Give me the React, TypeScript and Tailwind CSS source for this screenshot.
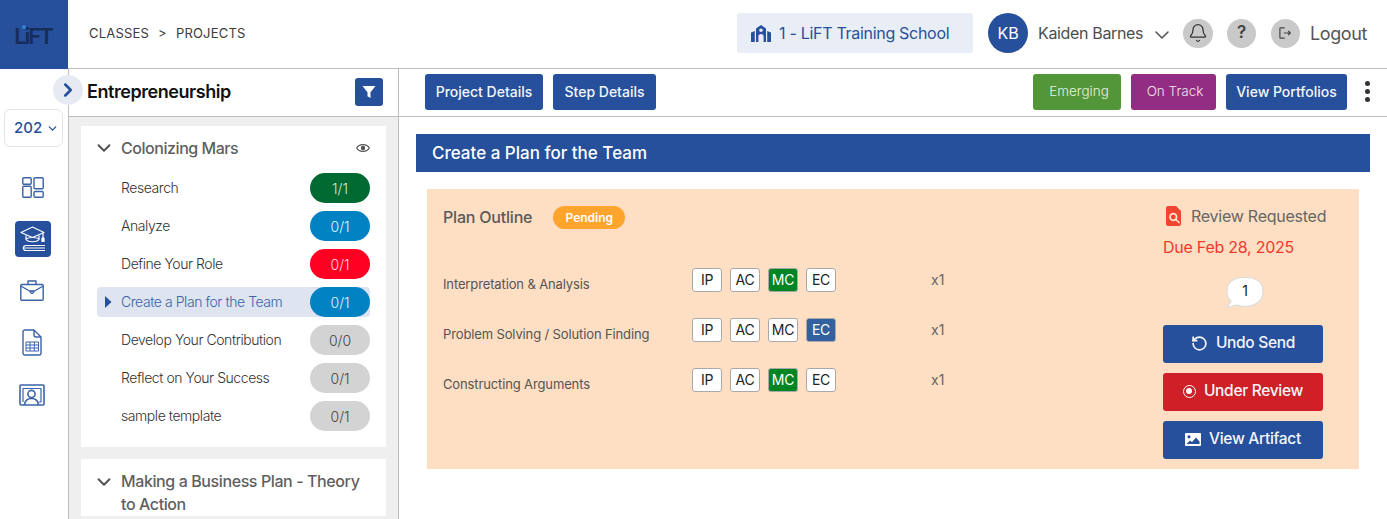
import React from "react";
import { ChevronDown, ChevronRight, Bell, RotateCcw } from "lucide-react";

const BLUE = "#26509b";

function Logo() {
  return (
    <div className="relative ml-[-2px] mt-[3px] font-['Inter'] text-[22px] font-semibold leading-none tracking-[-2px] text-[#182c58]">
      LiFT
      <span className="absolute left-[8px] top-[0px] h-[4px] w-[4px] rounded-full bg-[#3d80cf]" />
    </div>
  );
}

function DashIcon() {
  return (
    <svg width="22" height="21" viewBox="0 0 22 21" fill="none" stroke="#3a63a8" strokeWidth="1.4">
      <rect x="0.8" y="0.8" width="8.4" height="6.4" rx="1" />
      <rect x="0.8" y="9.2" width="8.4" height="11" rx="1" />
      <rect x="12" y="0.8" width="9.2" height="11" rx="1" />
      <rect x="12" y="14.5" width="9.2" height="5.7" rx="1" />
    </svg>
  );
}

function GradIcon() {
  return (
    <svg width="26" height="26" viewBox="0 0 26 26" fill="none" stroke="#fff" strokeWidth="1.2" strokeLinejoin="round">
      <path d="M12.5 1 L24 6.5 L12.5 11.5 L1 6.5 Z" />
      <path d="M6 9.5 V13.5 C8 16.5 17 16.5 19 13.5 V9.5" />
      <path d="M6 13 C9 11 16 11 19 13" />
      <path d="M23 7 V12" />
      <rect x="22" y="12" width="2" height="3.5" fill="#fff" />
      <path d="M6 19.5 H25 M6 24.5 H25" />
      <path d="M6 19.5 C2.5 19.5 2.5 24.5 6 24.5" />
      <path d="M3.5 22 H25" strokeWidth="1" />
    </svg>
  );
}

function BriefcaseIcon() {
  return (
    <svg width="24" height="21" viewBox="0 0 24 21" fill="none" stroke="#3a63a8" strokeWidth="1.4" strokeLinejoin="round">
      <path d="M8 4.5 V1 H16 V4.5" />
      <rect x="0.8" y="4.5" width="22.4" height="15.7" rx="1" />
      <path d="M0.8 6 L9.5 11 H14.5 L23.2 6" />
      <path d="M10.5 10.5 V12.5 L12 13.5 L13.5 12.5 V10.5" />
    </svg>
  );
}

function SheetIcon() {
  return (
    <svg width="20" height="27" viewBox="0 0 20 27" fill="none" stroke="#3a63a8" strokeWidth="1.4" strokeLinejoin="round">
      <path d="M3 1 H12 L19 8 V24 A2 2 0 0 1 17 26 H3 A2 2 0 0 1 1 24 V3 A2 2 0 0 1 3 1 Z" />
      <path d="M12 1 V6 A2 2 0 0 0 14 8 H19" />
      <rect x="4" y="13" width="12.5" height="9" strokeWidth="1" />
      <path d="M4 16 H16.5 M4 19 H16.5 M8 13 V22 M12.3 13 V22" strokeWidth="1" />
    </svg>
  );
}

function PortfolioIcon() {
  return (
    <svg width="26" height="22" viewBox="0 0 26 22" fill="none" stroke="#3a63a8" strokeWidth="1.6" strokeLinejoin="round">
      <path d="M5 21 H2 A1 1 0 0 1 1 20 V2 A1 1 0 0 1 2 1 H24 A1 1 0 0 1 25 2 V20 A1 1 0 0 1 24 21 H20" />
      <path d="M4 18 V4.5 H22 V18 H20" strokeWidth="1.2" />
      <circle cx="12.5" cy="10" r="3.6" />
      <path d="M5.5 21 C6 16 9 14.5 12.5 14.5 C16 14.5 19 16 19.5 21 Z" />
    </svg>
  );
}

function SchoolIcon() {
  return (
    <svg width="20" height="17" viewBox="0 0 20 17" fill={BLUE}>
      <path d="M10 0 L15 3.5 V17 H12.6 V11.5 A2.6 2.6 0 0 0 7.4 11.5 V17 H5 V3.5 Z M10 3.4 A1.8 1.8 0 1 0 10 7 A1.8 1.8 0 1 0 10 3.4 Z" fillRule="evenodd" />
      <path d="M0 7.5 L3.8 6 V17 H0 Z M20 7.5 L16.2 6 V17 H20 Z" />
    </svg>
  );
}

function ReviewIcon() {
  return (
    <svg width="16" height="20" viewBox="0 0 16 20" className="shrink-0">
      <path d="M2 0 H10 L15 5 V18 A2 2 0 0 1 13 20 H2 A2 2 0 0 1 0 18 V2 A2 2 0 0 1 2 0 Z" fill="#f2452f" />
      <circle cx="7.3" cy="11" r="3.3" fill="none" stroke="#fde5cf" strokeWidth="1.7" />
      <path d="M10 13.6 L13.5 17" stroke="#fde5cf" strokeWidth="1.7" />
    </svg>
  );
}

function PictureIcon() {
  return (
    <svg width="16" height="13" viewBox="0 0 16 13">
      <rect width="16" height="13" rx="1" fill="#fff" />
      <circle cx="4" cy="3.8" r="1.6" fill={BLUE} />
      <path d="M1.5 11 L5 7.5 L7 9 L11 4.5 L14.5 8.5 V11 Z" fill={BLUE} />
    </svg>
  );
}

function EyeIcon() {
  return (
    <svg width="14" height="10" viewBox="0 0 14 10" fill="none" stroke="#555" strokeWidth="1.2">
      <path d="M0.7 5 C3 0.5 11 0.5 13.3 5 C11 9.5 3 9.5 0.7 5 Z" />
      <circle cx="7" cy="5" r="2.2" fill="#555" stroke="none" />
    </svg>
  );
}

function FilterIcon() {
  return (
    <svg width="14" height="14" viewBox="0 0 14 14">
      <path d="M0.5 1 H13.5 L8.5 7.2 V13 L5.5 11.2 V7.2 Z" fill="#fff" />
    </svg>
  );
}

function ExitIcon() {
  return (
    <svg width="13" height="12" viewBox="0 0 16 15" fill="none" stroke="#444" strokeWidth="1.5" strokeLinejoin="round">
      <path d="M7 1 H2 A1 1 0 0 0 1 2 V13 A1 1 0 0 0 2 14 H7" />
      <path d="M6 7.5 H14 M11.5 5 L14 7.5 L11.5 10" />
    </svg>
  );
}

function Bubble() {
  return (
    <div className="relative h-[32px] w-[38px]">
      <svg width="38" height="32" viewBox="0 0 38 32" className="absolute left-0 top-0">
        <path d="M19 1 C29 1 37 4.5 37 15 C37 25 28 30 19 30 C16 30 13 29.5 11 28.5 L1 31 L5 25 C2 22 1 19 1 15 C1 4.5 9 1 19 1 Z" fill="#fff" stroke="#dcdcdc" strokeWidth="1.2" transform="translate(0,-0.5)" />
      </svg>
      <span className="absolute left-0 right-0 top-[4px] text-center text-[14px] leading-[20px] text-[#222]">1</span>
    </div>
  );
}

const items: { name: string; score: string; pill: string; text: string; active?: boolean }[] = [
  { name: "Research", score: "1/1", pill: "bg-[#006a33]", text: "text-[#d5e8dc]" },
  { name: "Analyze", score: "0/1", pill: "bg-[#0082c3]", text: "text-[#e3f2fa]" },
  { name: "Define Your Role", score: "0/1", pill: "bg-[#ff0022]", text: "text-[#ffd9de]" },
  { name: "Create a Plan for the Team", score: "0/1", pill: "bg-[#0082c3]", text: "text-[#e3f2fa]", active: true },
  { name: "Develop Your Contribution", score: "0/0", pill: "bg-[#d3d3d3]", text: "text-[#444]" },
  { name: "Reflect on Your Success", score: "0/1", pill: "bg-[#d3d3d3]", text: "text-[#444]" },
  { name: "sample template", score: "0/1", pill: "bg-[#d3d3d3]", text: "text-[#444]" },
];

function StepRow({ it }: { it: (typeof items)[number] }) {
  return (
    <div className={`flex h-[30px] items-center rounded-[4px] ${it.active ? "bg-[#dfe5f0]" : ""}`}>
      <div className="flex w-[24px] shrink-0 justify-center">
        {it.active && (
          <svg width="8" height="12" viewBox="0 0 8 12" className="ml-[-2px]">
            <path d="M1 0 L7.5 6 L1 12 Z" fill={BLUE} />
          </svg>
        )}
      </div>
      <div className={`flex-1 pb-[2px] text-[14px] font-light tracking-[-0.44px] ${it.active ? "text-[#3a63a8]" : "text-[#333]"}`}>{it.name}</div>
      <div className={`flex h-[30px] w-[60px] items-center justify-center rounded-full text-[14px] font-light ${it.pill} ${it.text}`}>{it.score}</div>
    </div>
  );
}

function Chip({ label, on }: { label: string; on?: "g" | "b" }) {
  const cls = on === "g" ? "bg-[#008522] text-white" : on === "b" ? "bg-[#33609f] text-white" : "bg-white text-[#222]";
  return (
    <div className={`flex h-[24px] w-[30px] items-center justify-center rounded-[3px] border border-[#a9a9a9] text-[14px] leading-none tracking-[-0.3px] ${cls}`}>{label}</div>
  );
}

const rubric: { label: string; on: Record<string, "g" | "b"> }[] = [
  { label: "Interpretation & Analysis", on: { MC: "g" } },
  { label: "Problem Solving / Solution Finding", on: { EC: "b" } },
  { label: "Constructing Arguments", on: { MC: "g" } },
];

function ActionButton({ icon, label, red }: { icon: React.ReactNode; label: string; red?: boolean }) {
  return (
    <button className={`flex h-[38px] w-[160px] items-center justify-center gap-[8px] rounded-[3px] pb-[2px] text-[15.5px] font-medium tracking-[-0.3px] text-[#f4f6fa] ${red ? "bg-[#cf1f27]" : "bg-[#26509b]"}`}>
      {icon}
      {label}
    </button>
  );
}

function ToolButton({ label, cls }: { label: string; cls: string }) {
  return <button className={`flex h-[36px] items-center justify-center rounded-[3px] ${cls}`}>{label}</button>;
}

function RoundIcon({ children, w }: { children: React.ReactNode; w: number }) {
  return (
    <div className="flex h-[29px] items-center justify-center rounded-full bg-[#c9c9c9]" style={{ width: w }}>
      {children}
    </div>
  );
}

export default function App() {
  return (
    <div className="flex h-[519px] w-[1387px] flex-col overflow-hidden bg-white font-['Inter',sans-serif]">
      {/* top bar */}
      <header className="flex h-[69px] shrink-0 border-b border-[#bdbdbd]">
        <div className="mb-[-1px] flex h-[69px] w-[68px] shrink-0 items-center justify-center bg-[#26509b]">
          <Logo />
        </div>
        <div className="ml-px flex flex-1 items-center pb-[2px] pl-[20px]">
          <div className="mt-[2px] flex items-center text-[13px] tracking-[0.2px] text-[#3c3c3c]">
            <span>CLASSES</span>
            <span className="mx-[9px]">&gt;</span>
            <span>PROJECTS</span>
          </div>
          <div className="ml-auto flex items-center">
            <div className="flex h-[40px] w-[236px] items-center gap-[8px] rounded-[3px] bg-[#e9edf5] pl-[14px] text-[16px] font-normal tracking-[-0.3px] text-[#26509b]">
              <SchoolIcon />
              <span>1 - LiFT Training School</span>
            </div>
            <div className="ml-[15px] flex h-[40px] w-[40px] items-center justify-center rounded-full bg-[#26509b] text-[16px] text-white">KB</div>
            <div className="ml-[10px] w-[105px] whitespace-nowrap text-[16px] tracking-[-0.35px] text-[#4d4d4d]">Kaiden Barnes</div>
            <ChevronDown size={24} strokeWidth={1.6} className="ml-[7px] mt-[4px] text-[#555]" />
            <div className="ml-[9px]"><RoundIcon w={30}><Bell size={20} strokeWidth={1.5} className="text-[#333]" /></RoundIcon></div>
            <div className="ml-[14px]"><RoundIcon w={29}><span className="text-[17px] font-semibold text-[#444]">?</span></RoundIcon></div>
            <div className="ml-[15px]"><RoundIcon w={29}><ExitIcon /></RoundIcon></div>
            <div className="ml-[10px] mr-[20px] text-[18px] tracking-[-0.4px] text-[#555]">Logout</div>
          </div>
        </div>
      </header>

      <div className="flex min-h-0 flex-1">
        {/* nav rail */}
        <nav className="flex w-[69px] shrink-0 flex-col items-center border-r border-[#bdbdbd] pt-[40px]">
          <div className="ml-[4px] flex h-[38px] w-[59px] items-center justify-between self-start rounded-[6px] border border-[#e4e4e4] pl-[9px] pr-[3px] text-[15px] font-medium text-[#26509b]">
            202
            <ChevronDown size={13} strokeWidth={2.4} />
          </div>
          <div className="mr-[3px] mt-[30px] flex"><DashIcon /></div>
          <div className="mr-[3px] mt-[23px] flex h-[36px] w-[36px] items-center justify-center rounded-[4px] bg-[#26509b]"><GradIcon /></div>
          <div className="mr-[5px] mt-[23px] flex"><BriefcaseIcon /></div>
          <div className="mr-[4px] mt-[28px] flex"><SheetIcon /></div>
          <div className="mr-[4px] mt-[28px] flex"><PortfolioIcon /></div>
        </nav>

        {/* project list */}
        <aside className="relative flex w-[330px] shrink-0 flex-col border-r border-[#bdbdbd]">
          <div className="absolute left-[-16px] top-[6px] flex h-[30px] w-[30px] items-center justify-center rounded-full bg-[#e6ebf3] text-[#26509b]">
            <ChevronRight size={22} strokeWidth={2.8} />
          </div>
          <div className="flex h-[48px] shrink-0 items-center justify-between border-b border-[#bdbdbd] pb-[2px] pl-[18px] pr-[15px]">
            <span className="text-[18px] font-semibold tracking-[-0.45px] text-[#111]">Entrepreneurship</span>
            <div className="flex h-[28px] w-[28px] items-center justify-center rounded-[3px] bg-[#26509b]">
              <FilterIcon />
            </div>
          </div>
          <div className="flex flex-1 flex-col gap-[12px] overflow-hidden bg-[#efefef] px-[12px] pt-[9px]">
            <section className="flex h-[321px] shrink-0 flex-col bg-white px-[16px]">
              <div className="flex h-[47px] shrink-0 items-center pb-[3px]">
                <ChevronDown size={22} strokeWidth={2.2} className="ml-[-4px] text-[#555]" />
                <span className="ml-[6px] text-[16px] font-medium tracking-[-0.45px] text-[#5f5f5f]">Colonizing Mars</span>
                <span className="ml-auto flex"><EyeIcon /></span>
              </div>
              <div className="flex flex-col gap-[8px]">
                {items.map((it) => <StepRow key={it.name} it={it} />)}
              </div>
            </section>
            <section className="flex shrink-0 bg-white px-[16px] pt-[11px]">
              <ChevronDown size={22} strokeWidth={2.2} className="ml-[-4px] mt-[1px] shrink-0 text-[#555]" />
              <span className="ml-[6px] text-[16px] font-medium leading-[23px] tracking-[-0.4px] text-[#5f5f5f]">Making a Business Plan - Theory to Action</span>
            </section>
          </div>
        </aside>

        {/* main */}
        <main className="flex min-w-0 flex-1 flex-col">
          <div className="flex h-[48px] shrink-0 items-center border-b border-[#bdbdbd] pb-[2px] pl-[26px] pr-[16px]">
            <div className="flex gap-[10px]">
              <ToolButton label="Project Details" cls="w-[118px] bg-[#26509b] text-[14px] text-[#f4f6fa] font-medium" />
              <ToolButton label="Step Details" cls="w-[103px] bg-[#26509b] text-[14px] text-[#f4f6fa] font-medium" />
            </div>
            <div className="ml-auto flex items-center gap-[10px]">
              <ToolButton label="Emerging" cls="w-[88px] bg-[#539639] pl-[4px] text-[13.5px] font-light text-[#e6f1e1]" />
              <ToolButton label="On Track" cls="w-[85px] bg-[#922d83] pl-[3px] text-[13.5px] font-light text-[#f3e3f0]" />
              <ToolButton label="View Portfolios" cls="w-[121px] bg-[#26509b] text-[14px] text-[#f4f6fa] font-medium" />
              <div className="ml-[6px] flex w-[8px] flex-col items-center gap-[3px]">
                <span className="h-[5px] w-[5px] rounded-full bg-[#333]" />
                <span className="h-[5px] w-[5px] rounded-full bg-[#333]" />
                <span className="h-[5px] w-[5px] rounded-full bg-[#333]" />
              </div>
            </div>
          </div>

          <div className="flex-1 px-[17px] pt-[17px]">
            <div className="flex h-[38px] items-center bg-[#26509b] pl-[16px] pt-[2px] text-[17px] font-medium text-white">Create a Plan for the Team</div>
            <div className="mx-[11px] mt-[17px] flex h-[280px] bg-[#fedfc3] pl-[16px] pr-[36px]">
              <div className="min-w-0 flex-1">
                <div className="mt-[17px] flex h-[23px] items-center">
                  <span className="pb-[2px] text-[16px] font-medium tracking-[-0.2px] text-[#5a5a5a]">Plan Outline</span>
                  <span className="ml-[21px] flex h-[23px] w-[72px] items-center justify-center rounded-full bg-[#ffa42d] text-[12px] font-semibold text-white">Pending</span>
                </div>
                <div className="mt-[39px] flex flex-col gap-[26px]">
                  {rubric.map((r) => (
                    <div key={r.label} className="flex h-[24px]">
                      <div className="mt-[8px] w-[249px] shrink-0 text-[13px] font-normal leading-[16px] tracking-[-0.13px] text-[#555]">{r.label}</div>
                      <div className="flex gap-[8px]">
                        {["IP", "AC", "MC", "EC"].map((c) => <Chip key={c} label={c} on={r.on[c]} />)}
                      </div>
                      <div className="ml-[95px] text-[14px] leading-[24px] text-[#666]">x1</div>
                    </div>
                  ))}
                </div>
              </div>
              <div className="flex w-[160px] shrink-0 flex-col">
                <div className="mt-[17px] flex h-[20px] items-center gap-[9px] pl-[3px]">
                  <ReviewIcon />
                  <span className="whitespace-nowrap text-[16px] tracking-[-0.25px] text-[#666]">Review Requested</span>
                </div>
                <div className="mt-[11px] whitespace-nowrap text-[16px] font-normal leading-[20px] tracking-[-0.25px] text-[#f0392b]">Due Feb 28, 2025</div>
                <div className="mt-[20px] flex justify-center pl-[4px]"><Bubble /></div>
                <div className="mt-[16px] flex flex-col gap-[10px]">
                  <ActionButton icon={<RotateCcw size={17} strokeWidth={2.4} />} label="Undo Send" />
                  <ActionButton icon={<span className="flex h-[13px] w-[13px] items-center justify-center rounded-full border-[1.5px] border-white"><span className="h-[6px] w-[6px] rounded-full bg-white" /></span>} label="Under Review" red />
                  <ActionButton icon={<PictureIcon />} label="View Artifact" />
                </div>
              </div>
            </div>
          </div>
        </main>
      </div>
    </div>
  );
}
